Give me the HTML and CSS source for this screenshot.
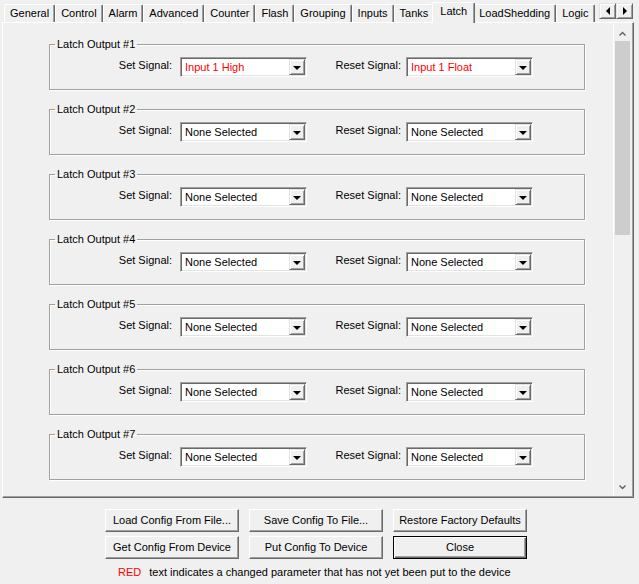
FILE: index.html
```html
<!DOCTYPE html>
<html lang="en">
<head>
    <meta charset="UTF-8">
    <title>Configuration - Latch</title>
    <link rel="stylesheet" href="styles.css">
</head>
<body>
    <div class="tabstrip">
        <div class="tab-list">
            <div class="tab">General</div>
            <div class="tab">Control</div>
            <div class="tab">Alarm</div>
            <div class="tab">Advanced</div>
            <div class="tab">Counter</div>
            <div class="tab">Flash</div>
            <div class="tab">Grouping</div>
            <div class="tab">Inputs</div>
            <div class="tab">Tanks</div>
            <div class="tab active">Latch</div>
            <div class="tab">LoadShedding</div>
            <div class="tab">Logic</div>
        </div>
        <div class="tab-scroll">
            <div class="spin"><span class="arrow-left"></span></div>
            <div class="spin"><span class="arrow-right"></span></div>
        </div>
    </div>

    <div class="panel">
        <div class="scroll-view">
            <fieldset class="group">
                <legend>Latch Output #1</legend>
                <div class="sig-row">
                    <label class="sig-label">Set Signal:</label>
                    <div class="combo changed"><span>Input 1 High</span><span class="drop"></span></div>
                    <label class="sig-label reset">Reset Signal:</label>
                    <div class="combo changed"><span>Input 1 Float</span><span class="drop"></span></div>
                </div>
            </fieldset>
            <fieldset class="group">
                <legend>Latch Output #2</legend>
                <div class="sig-row">
                    <label class="sig-label">Set Signal:</label>
                    <div class="combo"><span>None Selected</span><span class="drop"></span></div>
                    <label class="sig-label reset">Reset Signal:</label>
                    <div class="combo"><span>None Selected</span><span class="drop"></span></div>
                </div>
            </fieldset>
            <fieldset class="group">
                <legend>Latch Output #3</legend>
                <div class="sig-row">
                    <label class="sig-label">Set Signal:</label>
                    <div class="combo"><span>None Selected</span><span class="drop"></span></div>
                    <label class="sig-label reset">Reset Signal:</label>
                    <div class="combo"><span>None Selected</span><span class="drop"></span></div>
                </div>
            </fieldset>
            <fieldset class="group">
                <legend>Latch Output #4</legend>
                <div class="sig-row">
                    <label class="sig-label">Set Signal:</label>
                    <div class="combo"><span>None Selected</span><span class="drop"></span></div>
                    <label class="sig-label reset">Reset Signal:</label>
                    <div class="combo"><span>None Selected</span><span class="drop"></span></div>
                </div>
            </fieldset>
            <fieldset class="group">
                <legend>Latch Output #5</legend>
                <div class="sig-row">
                    <label class="sig-label">Set Signal:</label>
                    <div class="combo"><span>None Selected</span><span class="drop"></span></div>
                    <label class="sig-label reset">Reset Signal:</label>
                    <div class="combo"><span>None Selected</span><span class="drop"></span></div>
                </div>
            </fieldset>
            <fieldset class="group">
                <legend>Latch Output #6</legend>
                <div class="sig-row">
                    <label class="sig-label">Set Signal:</label>
                    <div class="combo"><span>None Selected</span><span class="drop"></span></div>
                    <label class="sig-label reset">Reset Signal:</label>
                    <div class="combo"><span>None Selected</span><span class="drop"></span></div>
                </div>
            </fieldset>
            <fieldset class="group">
                <legend>Latch Output #7</legend>
                <div class="sig-row">
                    <label class="sig-label">Set Signal:</label>
                    <div class="combo"><span>None Selected</span><span class="drop"></span></div>
                    <label class="sig-label reset">Reset Signal:</label>
                    <div class="combo"><span>None Selected</span><span class="drop"></span></div>
                </div>
            </fieldset>
        </div>

        <div class="scrollbar">
            <div class="sb-btn">
                <svg width="7" height="5" viewBox="0 0 7 5"><polyline points="0.5,4.5 3.5,1.5 6.5,4.5" fill="none" stroke="#606060" stroke-width="1.4"/></svg>
            </div>
            <div class="sb-thumb"></div>
            <div class="sb-track"></div>
            <div class="sb-btn">
                <svg width="7" height="5" viewBox="0 0 7 5"><polyline points="0.5,0.5 3.5,3.5 6.5,0.5" fill="none" stroke="#606060" stroke-width="1.4"/></svg>
            </div>
        </div>
    </div>

    <div class="actions">
        <button class="btn">Load Config From File...</button>
        <button class="btn">Save Config To File...</button>
        <button class="btn">Restore Factory Defaults</button>
        <button class="btn">Get Config From Device</button>
        <button class="btn">Put Config To Device</button>
        <button class="btn default">Close</button>
    </div>

    <p class="legend-note"><span class="red">RED</span><span>text indicates a changed parameter that has not yet been put to the device</span></p>
</body>
</html>
```

FILE: styles.css
```css
body {
    margin: 0;
    background: #f0f0f0;
    font-family: 'Liberation Sans', Arial, sans-serif;
    font-size: 11px;
    color: #000;
    width: 639px;
    height: 584px;
    overflow: hidden;
}

/* tab header */
.tabstrip {
    display: flex;
    align-items: flex-end;
    height: 23px;
    margin-bottom: -1px;
    position: relative;
    z-index: 1;
}

.tab-list {
    display: flex;
    align-items: flex-end;
    flex: 1 1 auto;
    min-width: 0;
    height: 23px;
    padding-left: 4px;
    overflow: hidden;
}

.tab {
    flex-shrink: 0;
    box-sizing: border-box;
    height: 18px;
    margin-bottom: 1px;
    padding: 0 5px;
    line-height: 17px;
    border: 1px solid;
    border-color: #fff #696969 transparent #fff;
    border-bottom: none;
    border-radius: 2px 2px 0 0;
    box-shadow: inset -1px 0 #a0a0a0;
    white-space: nowrap;
}

.tab.active {
    position: relative;
    z-index: 2;
    height: 21px;
    margin: 0 -2px;
    padding: 0 7px;
    background: #f0f0f0;
}

.tab-scroll {
    display: flex;
    align-self: flex-start;
    flex-shrink: 0;
    margin-top: 3px;
    margin-right: 6px;
}

.spin {
    width: 17px;
    height: 16px;
    box-sizing: border-box;
    display: flex;
    align-items: center;
    justify-content: center;
    border: 1px solid;
    border-color: #e3e3e3 #696969 #696969 #e3e3e3;
    box-shadow: inset 1px 1px #fff, inset -1px -1px #a0a0a0;
    background: #f0f0f0;
}

.arrow-left {
    border-top: 4px solid transparent;
    border-bottom: 4px solid transparent;
    border-right: 4px solid #000;
}

.arrow-right {
    border-top: 4px solid transparent;
    border-bottom: 4px solid transparent;
    border-left: 4px solid #000;
}

/* tab page */
.panel {
    display: flex;
    box-sizing: border-box;
    height: 476px;
    margin: 0 5px 0 2px;
    padding: 2px 2px 2px 1px;
    border: 1px solid;
    border-color: #fff #696969 #696969 #fff;
    box-shadow: inset -1px -1px #a0a0a0;
}

.scroll-view {
    flex: 1;
    overflow: hidden;
    padding: 13px 0 0 45px;
}

.group {
    box-sizing: border-box;
    width: 536px;
    margin: 0 0 13px 0;
    padding: 6px 0 12px 0;
    border: 1px solid #a0a0a0;
    box-shadow: 1px 1px 0 #fff, inset 1px 1px 0 #fff;
}

.group legend {
    margin-left: 5px;
    padding: 0 2px;
    line-height: 13px;
}

.sig-row {
    display: grid;
    grid-template-columns: 130px 127px 99px 127px;
    align-items: start;
}

.sig-label {
    margin-top: 2px;
    padding-right: 8px;
    line-height: 13px;
    text-align: right;
}

.sig-label.reset {
    padding-right: 5px;
}

.combo {
    display: flex;
    align-items: center;
    box-sizing: border-box;
    height: 20px;
    padding-left: 4px;
    background: #fff;
    border: 1px solid;
    border-color: #a0a0a0 #fff #fff #a0a0a0;
    box-shadow: inset 1px 1px #696969, inset -1px -1px #e3e3e3;
    white-space: nowrap;
}

.combo.changed {
    color: #ff0000;
}

.drop {
    display: flex;
    align-items: center;
    justify-content: center;
    box-sizing: border-box;
    width: 16px;
    height: 16px;
    margin: 0 1px 0 auto;
    background: #f0f0f0;
    border: 1px solid;
    border-color: #e3e3e3 #696969 #696969 #e3e3e3;
    box-shadow: inset 1px 1px #fff, inset -1px -1px #a0a0a0;
}

.drop::after {
    content: "";
    border-left: 4px solid transparent;
    border-right: 4px solid transparent;
    border-top: 4px solid #000;
    margin-top: 1px;
}

/* vertical scroll bar */
.scrollbar {
    display: flex;
    flex-direction: column;
    width: 17px;
    border-left: 1px solid #fff;
    background: #f0f0f0;
}

.sb-btn {
    display: flex;
    align-items: center;
    justify-content: center;
    height: 16px;
    flex-shrink: 0;
}

.sb-thumb {
    height: 194px;
    margin: 0 1px;
    background: #cdcdcd;
}

.sb-track {
    flex: 1;
}

/* bottom buttons */
.actions {
    display: grid;
    grid-template-columns: repeat(3, 134px);
    column-gap: 10px;
    row-gap: 4px;
    margin: 11px 0 0 105px;
}

.btn {
    box-sizing: border-box;
    height: 23px;
    padding: 0;
    font-family: inherit;
    font-size: 11px;
    line-height: 13px;
    color: #000;
    background: #f0f0f0;
    border: 1px solid;
    border-color: #fff #696969 #696969 #fff;
    box-shadow: inset -1px -1px #a0a0a0;
}

.btn.default {
    border-color: #000;
    box-shadow: inset 1px 1px #fff, inset -1px -1px #696969, inset -2px -2px #a0a0a0;
}

.legend-note {
    display: flex;
    gap: 8px;
    margin: 7px 0 0 118px;
    line-height: 13px;
}

.red {
    color: #ff0000;
}
```
